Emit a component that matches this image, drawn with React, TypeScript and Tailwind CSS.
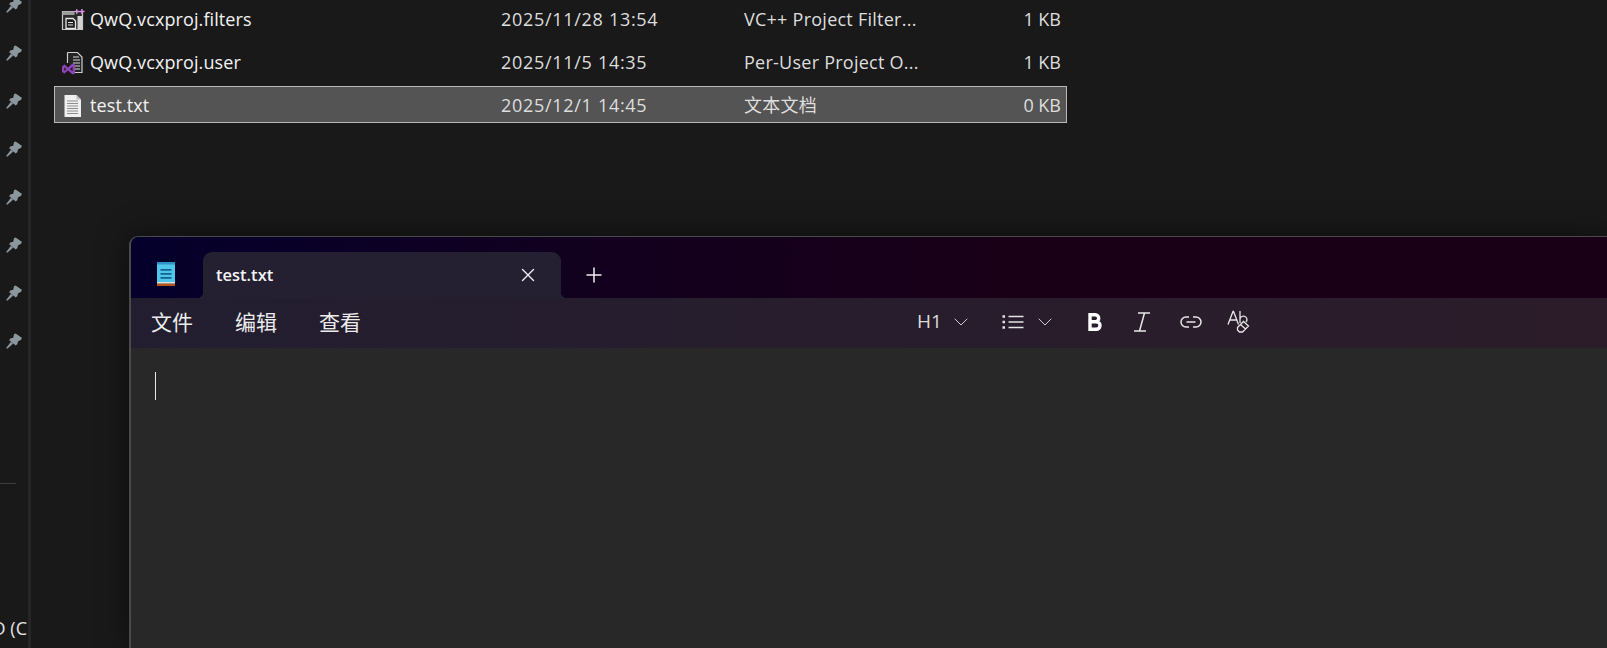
import { ChevronDown, Plus, X } from 'lucide-react';

const uiFont = 'font-["Open_Sans","Noto_Sans_CJK_SC",sans-serif]';

const pinRows = ['a', 'b', 'c', 'd', 'e', 'f', 'g', 'h'];

function PinIcon() {
  return (
    <svg width="16" height="16" viewBox="0 0 16 16" fill="#8b969d">
      <path d="M9.600 .4 15.800 4.800 15.400 6.600 12 8.400 11.400 11 9.800 12.400 3.200 7.200 4.200 5.400 7.200 4.800 8 1.200Z" />
      <path d="M5 8.800 7.200 10.600 1.400 15.800 .2 15Z" />
    </svg>
  );
}

function FiltersIcon() {
  return (
    <svg width="24" height="24" viewBox="0 0 24 24" fill="none">
      <path d="M1.500 3.500h20v18h-20z" fill="#2a2a2a" stroke="#c8c8c8" strokeWidth="1.200" />
      <path d="M1.500 3.500h12v3.500h-12z" fill="#9a9a9a" />
      <path d="M5 10.500h7l2.500 2.500v7.500H5z" fill="#1d1d1d" stroke="#e6e6e6" strokeWidth="1.300" />
      <path d="M7 14.500h5M7 17h5" stroke="#e6e6e6" />
      <path d="M16.500 8h4.500v13h-4.500z" fill="#d2d2d2" />
      <path d="M13.500 3.500h4.500M15.750 1.250v4.500M18.500 3.500h5M21 1v5" stroke="#d98be8" strokeWidth="1.500" />
    </svg>
  );
}

function UserFileIcon() {
  return (
    <svg width="24" height="24" viewBox="0 0 24 24" fill="none">
      <path d="M6.500 1.500h10l4.500 4.500v15.500H10" fill="#242424" stroke="#cfcfcf" strokeWidth="1.200" />
      <path d="M6.500 1.500V12" stroke="#cfcfcf" strokeWidth="1.200" />
      <path d="M12 6h6M12 9h7M12 12h7M14 15h5M14 18h5" stroke="#d8d8d8" />
      <path d="M1 15.500 3.500 13.500 7 16.500 11.500 12.500 14 13.500V22.500L11.500 23.500 7 19.500 3.500 22.500 1 21Z" fill="#8e44b8" />
      <path d="M3.300 16.300v3.800l2-1.900zM9 18l2.600 2.200v-4.400z" fill="#1b1b1b" />
    </svg>
  );
}

function TextFileIcon() {
  return (
    <svg width="20" height="24" viewBox="0 0 20 24" fill="none">
      <path d="M1.500 1h12l4.500 4.500V23H1.500z" fill="#f0f0f0" />
      <path d="M13.500 1v4.500H18" fill="#bdbdbd" />
      <path d="M4 7h11M4 9.500h11M4 12h11M4 14.500h11M4 17h11M4 19.500h11" stroke="#8d8d8d" />
    </svg>
  );
}

function NotepadIcon() {
  return (
    <svg width="18" height="24" viewBox="0 0 18 24">
      <path d="M0 1h18v21H0z" fill="#4fc6ea" />
      <path d="M0 0h18v2.500H0z" fill="#2c93c4" />
      <path d="M3.500 7h11v1.800h-11zM3.500 11h11v1.800h-11zM3.500 15h11v1.800h-11z" fill="#14618f" />
      <path d="M0 20h18v1.500H0z" fill="#e8e0d4" />
      <path d="M0 21.500h18V24H0z" fill="#b3541e" />
    </svg>
  );
}

function ListIcon() {
  return (
    <svg width="22" height="16" viewBox="0 0 22 16" fill="none" stroke="#e4e4e4" strokeWidth="1.500">
      <path d="M6.500 2.500h15M6.500 8h15M6.500 13.500h15" />
      <path d="M.5 2.500h2.500M.5 8h2.500M.5 13.500h2.500" strokeWidth="2.500" />
    </svg>
  );
}

function BoldIcon() {
  return (
    <svg width="14" height="18" viewBox="0 0 14 18" fill="none" stroke="#fff" strokeWidth="3.400">
      <path d="M2 1.700h5.200a3.500 3.500 0 0 1 0 7H2zM2 8.700h6.200a3.800 3.800 0 0 1 0 7.600H2z" />
    </svg>
  );
}

function ItalicIcon() {
  return (
    <svg width="18" height="20" viewBox="0 0 18 20" fill="none" stroke="#e8e8e8" strokeWidth="1.500">
      <path d="M5 1h12M1 19h12M11.500 1 6.500 19" />
    </svg>
  );
}

function LinkIcon() {
  return (
    <svg width="22" height="12" viewBox="0 0 22 12" fill="none" stroke="#e8e8e8" strokeWidth="1.500">
      <path d="M9 1H6a5 5 0 0 0 0 10h3M13 1h3a5 5 0 0 1 0 10h-3M6.500 6h9" />
    </svg>
  );
}

function ClearFormatIcon() {
  return (
    <svg width="23" height="23" viewBox="0 0 23 23" fill="none" stroke="#e8e8e8" strokeWidth="1.300">
      <path d="M1 14.500 6 1.500h.5l5 13M3 10h7" />
      <path d="M13 1v12M13 9a3.500 3.500 0 1 1 6 3" />
      <path d="M10.500 17.500 16.500 11.500 21.500 16 15.500 22H12.500L10.500 20ZM13.500 14.500l5 4.500" fill="#2b1c2a" />
    </svg>
  );
}

function FileRow({
  icon,
  name,
  date,
  type,
  size,
  selected,
}: {
  icon: React.ReactNode;
  name: string;
  date: string;
  type: string;
  size: string;
  selected?: boolean;
}) {
  return (
    <div
      className={`flex h-[37px] w-[1013px] items-center border pt-[2px] text-[18px] text-[#dedede] ${
        selected ? 'border-[#b9b9b9] bg-[#545454]' : 'border-transparent'
      }`}
    >
      <div className="flex w-[35px] justify-center">{icon}</div>
      <span className="w-[411px] tracking-[0.1px] text-[#f2f2f2]">{name}</span>
      <span className="w-[243px] tracking-[0.7px]">{date}</span>
      <span className="w-[258px] tracking-[0.25px] whitespace-nowrap">{type}</span>
      <span className="w-[59px] text-right">{size}</span>
    </div>
  );
}

export default function App() {
  return (
    <div className={`flex h-[648px] w-[1607px] overflow-hidden bg-[#191919] ${uiFont}`}>
      {/* Explorer nav pane */}
      <aside className="flex w-[31px] shrink-0 flex-col border-r-[3px] border-[#262626]">
        <div className="-mt-[3px] flex flex-col gap-[32px] pl-[6px]">
          {pinRows.map((pin) => (
            <PinIcon key={pin} />
          ))}
        </div>
        <div className="mt-[134px] h-[1px] w-[16px] bg-[#3c3c3c]" />
        <div className="mt-[133px] flex h-[22px] justify-end overflow-hidden pr-[1px] text-[18px] leading-[22px] whitespace-nowrap text-[#e4e4e4]">
          D (C
        </div>
      </aside>

      <main className="flex min-w-0 flex-1 flex-col">
        {/* File list */}
        <div className="flex flex-col gap-[6px] pl-[23px]">
          <FileRow icon={<FiltersIcon />} name="QwQ.vcxproj.filters" date="2025/11/28 13:54" type="VC++ Project Filter..." size="1 KB" />
          <FileRow icon={<UserFileIcon />} name="QwQ.vcxproj.user" date="2025/11/5 14:35" type="Per-User Project O..." size="1 KB" />
          <FileRow icon={<TextFileIcon />} name="test.txt" date="2025/12/1 14:45" type="文本文档" size="0 KB" selected />
        </div>

        {/* Notepad window */}
        <section className="mt-[113px] ml-[98px] flex min-h-0 flex-1 flex-col overflow-hidden rounded-tl-[9px] border-t-[1px] border-l-[2px] border-[#4a4a4a] bg-[#282828] shadow-[0_0_30px_rgba(0,0,0,0.5)]">
          <div className="flex h-[61px] shrink-0 items-end bg-[linear-gradient(90deg,#04002c_0%,#12001f_30%,#190017_60%,#190017_100%)]">
            <div className="flex w-[72px] justify-center self-center pt-[13px] pr-[2px]">
              <NotepadIcon />
            </div>
            <div className="relative flex h-[46px] w-[358px] items-center justify-between rounded-t-[9px] bg-[#241f31] pr-[22px] pl-[13px]">
              <span className="absolute bottom-0 -left-[6px] h-[6px] w-[6px] bg-[radial-gradient(circle_at_0_0,transparent_6px,#241f31_6.500px)]" />
              <span className="absolute -right-[6px] bottom-0 h-[6px] w-[6px] bg-[radial-gradient(circle_at_100%_0,transparent_6px,#241f31_6.500px)]" />
              <span className="text-[16.500px] font-semibold text-[#f4f4f4]">test.txt</span>
              <X size={22} strokeWidth={1.500} color="#f0f0f0" />
            </div>
            <div className="flex h-[46px] items-center pl-[21px]">
              <Plus size={24} strokeWidth={1.500} color="#f0f0f0" />
            </div>
          </div>

          <div className="flex h-[50px] shrink-0 items-center bg-[linear-gradient(90deg,#221e30_0%,#271d2d_45%,#2c1c2a_100%)] pb-[1px] text-[#ececec]">
            <div className="flex gap-[42px] pl-[20px] text-[21px]">
              <span>文件</span>
              <span>编辑</span>
              <span>查看</span>
            </div>
            <div className="-mt-[2px] ml-[556px] flex items-center">
              <span className="text-[19px] text-[#dcdcdc]">H1</span>
              <ChevronDown size={24} strokeWidth={1} color="#cfcfcf" className="ml-[7px]" />
              <div className="ml-[29px]">
                <ListIcon />
              </div>
              <ChevronDown size={24} strokeWidth={1} color="#cfcfcf" className="ml-[9px]" />
              <div className="ml-[31px]">
                <BoldIcon />
              </div>
              <div className="ml-[31px]">
                <ItalicIcon />
              </div>
              <div className="ml-[29px]">
                <LinkIcon />
              </div>
              <div className="ml-[25px]">
                <ClearFormatIcon />
              </div>
            </div>
          </div>

          <div className="flex-1 pt-[24px] pl-[24px]">
            <div className="h-[28px] w-[1px] bg-[#e8e8e8]" />
          </div>
        </section>
      </main>
    </div>
  );
}
